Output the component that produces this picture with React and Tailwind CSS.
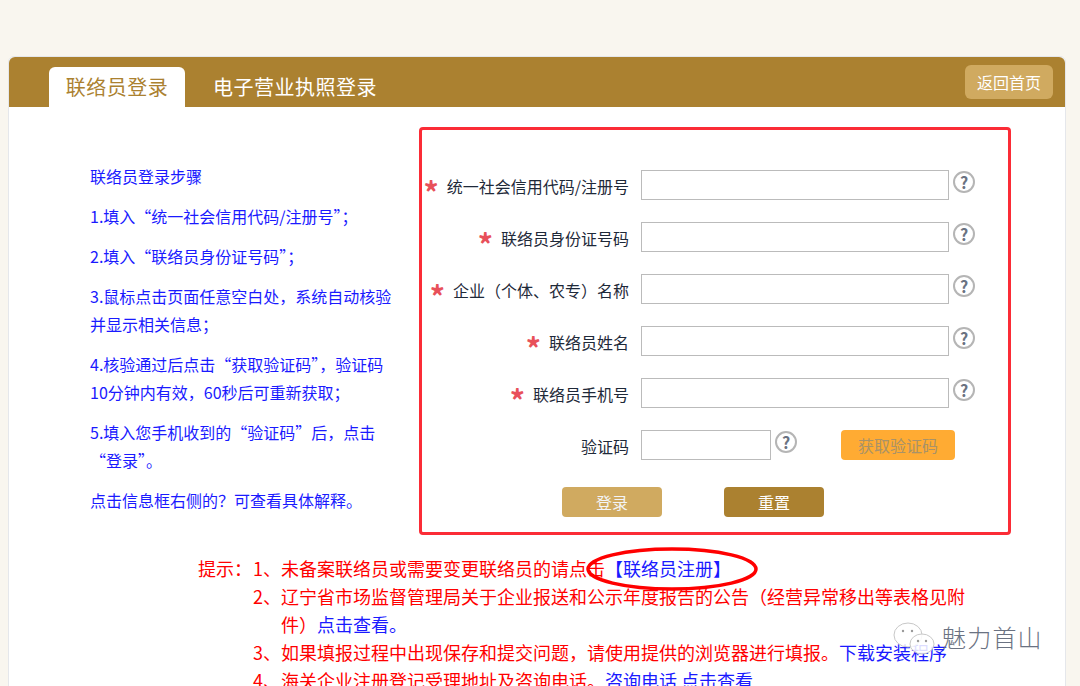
const font = { fontFamily: '"Noto Sans CJK SC","Liberation Sans",sans-serif' };

const COMMA = "\uFF0C";
const SEMI = "\uFF1B";
const COLON = "\uFF1A";
const LP = "\uFF08";
const RP = "\uFF09";
const QM = "\uFF1F";

function Help() {
  return (
    <span className="flex items-center justify-center w-5.5 h-5.5 mb-1.5 ml-1 rounded-full border-2 border-[#b5b5b5] bg-white text-base font-bold text-gray-500">
      ?
    </span>
  );
}

function Row({ label, star, children }) {
  return (
    <div className="flex items-center h-13 -ml-px">
      <div className="flex items-center justify-end w-52 gap-2 text-base whitespace-nowrap text-gray-800">
        {star && <span className="text-3xl leading-none mt-3 font-bold text-[#e8505a]">*</span>}
        <span className="mt-0.5">{label}</span>
      </div>
      <div className="flex items-center ml-3">{children}</div>
    </div>
  );
}

const inputCls = "h-7.5 border border-[#bbbbbb] bg-white";

const fields = [
  "统一社会信用代码/注册号",
  "联络员身份证号码",
  `企业${LP}个体、农专${RP}名称`,
  "联络员姓名",
  "联络员手机号",
];

const steps = [
  "联络员登录步骤",
  `1.填入“统一社会信用代码/注册号”${SEMI}`,
  `2.填入“联络员身份证号码”${SEMI}`,
  `3.鼠标点击页面任意空白处${COMMA}系统自动核验并显示相关信息${SEMI}`,
  `4.核验通过后点击“获取验证码”${COMMA}验证码10分钟内有效${COMMA}60秒后可重新获取${SEMI}`,
  `5.填入您手机收到的“验证码”后${COMMA}点击\u200B“登录”。`,
  `点击信息框右侧的${QM}可查看具体解释。`,
];

export default function App() {
  return (
    <div style={font} className="relative h-[686px] overflow-hidden bg-[#f9f6ef]">
      <div className="ml-2 mr-3.5 mt-14 h-[700px] bg-white border border-gray-200 rounded-t-md">
        <div className="flex items-end justify-between h-12.5 pl-10 pr-3 bg-[#ab8130] rounded-t-md">
          <div className="flex items-end">
            <div className="flex items-center justify-center h-10 w-34 bg-white rounded-t-md text-xl tracking-wide text-[#ab8130]">联络员登录</div>
            <div className="flex items-center h-10 pl-7 text-xl tracking-wide text-white">电子营业执照登录</div>
          </div>
          <div className="flex items-center h-8.5 mb-2 px-3 bg-[#d0aa60] rounded-md text-base text-white">返回首页</div>
        </div>

        <div className="flex">
          <div className="w-80 pl-20 pt-13.75 shrink-0">
            <div className="flex flex-col gap-3 w-76 ml-px text-base leading-7 text-[#1a1aff]">
              {steps.map((s) => (
                <p key={s}>{s}</p>
              ))}
            </div>
          </div>
          <div className="w-[592px] mt-5 ml-[90px] border-3 border-red-500 rounded-sm pt-7.25 pb-3.75">
            {fields.map((f) => (
              <Row key={f} label={f} star>
                <div className={`${inputCls} w-77`} />
                <Help />
              </Row>
            ))}
            <Row label="验证码">
              <div className={`${inputCls} w-32.5`} />
              <Help />
              <div className="flex items-center justify-center w-28.5 h-7.5 ml-11 bg-[#ffab33] rounded-sm text-base text-[#a89268]">获取验证码</div>
            </Row>
            <div className="flex gap-15.5 pl-35 mt-4">
              <div className="flex items-center justify-center w-25 h-7.5 bg-[#d0aa60] rounded-sm text-base text-gray-100">登录</div>
              <div className="flex items-center justify-center w-25 h-7.5 bg-[#ab8130] rounded-sm text-base text-white">重置</div>
            </div>
          </div>
        </div>

        <div className="flex pl-47.25 mt-4.75 text-lg leading-7 text-[#ff0000]">
          <div className="w-13.75 shrink-0">{`提示${COLON}`}</div>
          <div className="w-180">
            <div className="flex"><span className="w-7 shrink-0">1、</span><p>未备案联络员或需要变更联络员的请点击<span className="text-[#1a1aff]">【联络员注册】</span></p></div>
            <div className="flex"><span className="w-7 shrink-0">2、</span><p className="w-175">{`辽宁省市场监督管理局关于企业报送和公示年度报告的公告${LP}经营异常移出等表格见附件${RP}`}<span className="text-[#1a1aff]">点击查看。</span></p></div>
            <div className="flex"><span className="w-7 shrink-0">3、</span><p>{`如果填报过程中出现保存和提交问题${COMMA}请使用提供的浏览器进行填报。`}<span className="text-[#1a1aff]">下载安装程序</span></p></div>
            <div className="flex"><span className="w-7 shrink-0">4、</span><p>海关企业注册登记受理地址及咨询电话。<span className="text-[#1a1aff]">咨询电话 点击查看</span></p></div>
          </div>
        </div>
      </div>

      <svg className="absolute left-[584px] top-[545px]" width="176" height="48" viewBox="0 0 176 48" fill="none">
        <ellipse cx="88" cy="24" rx="84" ry="20" stroke="#ff0000" strokeWidth="3.5" />
      </svg>

      <div className="absolute left-[892px] top-[620px] flex items-center gap-1.5">
        <svg width="44" height="40" viewBox="0 0 44 40" fill="none">
          <ellipse cx="16" cy="15" rx="14" ry="12" fill="#ffffff" fillOpacity="0.8" stroke="#c8c8c8" />
          <ellipse cx="30" cy="24" rx="12" ry="10" fill="#ffffff" fillOpacity="0.85" stroke="#c8c8c8" />
          <circle cx="11" cy="11" r="1.2" fill="#999" />
          <circle cx="20" cy="11" r="1.2" fill="#999" />
          <circle cx="26" cy="21" r="1.2" fill="#999" />
          <circle cx="34" cy="21" r="1.2" fill="#999" />
        </svg>
        <span className="mb-1.5 text-2xl tracking-wider font-light text-gray-500">魅力首山</span>
      </div>
    </div>
  );
}
